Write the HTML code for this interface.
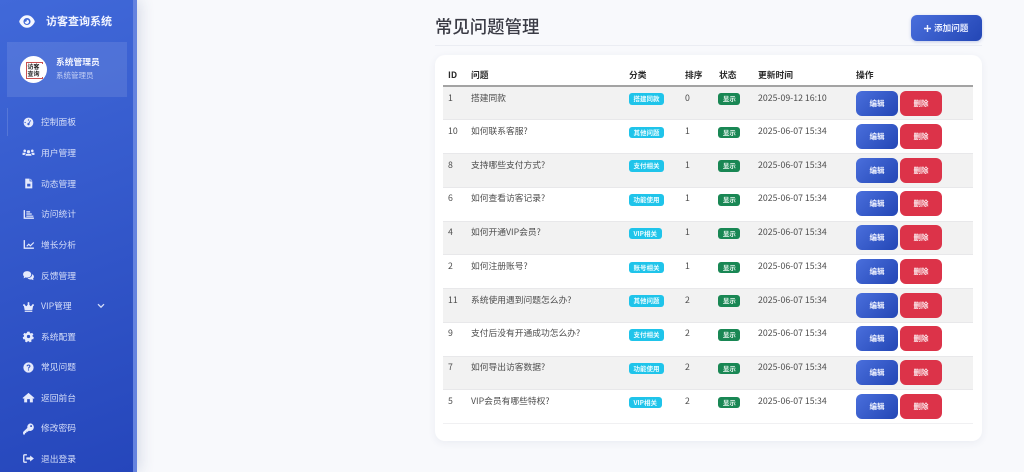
<!DOCTYPE html>
<html lang="zh"><head><meta charset="utf-8"><title>常见问题管理</title>
<style>
*{box-sizing:border-box;margin:0;padding:0}
html,body{width:1024px;height:472px;overflow:hidden;background:#f8f9fc;font-family:"Noto Sans CJK SC","Liberation Sans",sans-serif;color:#4a4a4a;font-size:8.75px}
.side{position:absolute;left:0;top:0;width:137px;height:472px;background:linear-gradient(160deg,#4169d9 0%,#2546bb 100%);border-right:4px solid #6583df;box-shadow:3px 0 14px rgba(40,60,120,.16)}
.logo{position:absolute;left:46px;top:13px;font-size:11px;font-weight:700;line-height:16px;color:#f1f4ff;white-space:nowrap}
.prof{position:absolute;left:7px;top:42px;width:120px;height:55px;background:rgba(255,255,255,.1)}
.av{position:absolute;left:13px;top:14px;width:27px;height:27px;border-radius:50%;background:#fff;color:#222;font-size:6px;font-weight:700;line-height:7px;text-align:center;padding-top:6.5px}
.av:before{content:"";position:absolute;left:6px;top:6px;width:15px;height:15px;border:1px solid #c8504f;clip-path:polygon(0 0,30% 0,30% 100%,0 100%,0 0,100% 0,100% 12%,0 12%,0 88%,100% 88%,100% 100%,0 100%)}
.n{position:absolute;left:49px;top:13px;font-size:8.75px;font-weight:700;color:#f3f5ff;line-height:13px;white-space:nowrap}
.s{position:absolute;left:49px;top:28px;font-size:7.5px;color:#c5d0f5;line-height:12px;white-space:nowrap}
.m{position:absolute;left:41px;font-size:8.75px;line-height:12px;color:#d6def9;white-space:nowrap}
.i{position:absolute;left:22px;width:13px;height:13px;margin-top:1px;fill:#e5eafc}
.act{position:absolute;left:7px;top:108px;width:1px;height:28px;background:rgba(255,255,255,.14)}
h1{position:absolute;left:435px;top:14px;font-size:17.4px;line-height:26px;font-weight:500;color:#3a3b45;white-space:nowrap}
.hr{position:absolute;left:435px;top:45px;width:547px;height:1px;background:#ebedf3}
.add{position:absolute;left:911px;top:15px;width:71px;height:26px;border-radius:6px;background:linear-gradient(135deg,#4a6fdc,#2346b5);color:#e8edff;font-size:8.6px;font-weight:700;line-height:26px;text-align:center;white-space:nowrap;box-shadow:0 1px 3px rgba(40,70,170,.25)}
.add svg{position:absolute;left:13px;top:9.5px;width:7px;height:7px;fill:#f0f3ff}
.add span{position:absolute;left:23px;top:0}
.card{position:absolute;left:435px;top:55px;width:547px;height:386px;background:#fff;border-radius:10px;box-shadow:0 2px 8px rgba(60,70,110,.07)}
table{position:absolute;left:8px;top:8px;width:530px;border-collapse:collapse;table-layout:fixed}
th{height:23px;text-align:left;font-size:8.75px;font-weight:700;color:#2b2b2b;padding:1px 0 0 5px;border-bottom:2px solid #a3a3a3;line-height:12px}
td{height:33.75px;vertical-align:top;padding:4.7px 0 0 5px;border-bottom:1px solid #e8e8ea;line-height:12px;white-space:nowrap;color:#4d4d4d}
tr.o td{background:#f2f2f2}
tr:last-child td{border-bottom:1px solid #f0f0f2}
.b{display:inline-block;height:11.5px;line-height:11.5px;border-radius:3px;padding:0 4.5px;font-size:6.5px;font-weight:700;color:#e8fbff;background:#1fc4ea;vertical-align:top;margin-top:1.8px;white-space:nowrap}
.g{background:#198754;color:#e6f5ee;padding:0 4.5px;margin-left:-.7px}
td.a{padding:3.5px 0 0 5px}
.e,.d{display:inline-block;width:42px;height:25px;border-radius:6px;font-size:7.5px;font-weight:700;line-height:25px;text-align:center;color:#f0f3ff;vertical-align:top}
.e{background:linear-gradient(135deg,#4a6fdc,#2346b5)}
.d{background:#dc3349;margin-left:2px;color:#fbe9ec}
</style></head><body>
<div class="side">
<svg viewBox="0 0 576 512" style="position:absolute;left:19px;top:13.5px;width:16px;height:15px;fill:#f4f6ff"><path d="M288 32C146 32 44 152 12 240c-4 10-4 22 0 32 32 88 134 208 276 208s244-120 276-208c4-10 4-22 0-32C532 152 430 32 288 32zm0 352a128 128 0 1 1 0-256 128 128 0 0 1 0 256zm0-192c-4 0-8 0-12 1 10 22 4 48-14 62-16 12-38 14-56 5-2 36 20 70 54 80 42 12 86-12 98-54 14-50-22-94-70-94z"/></svg>
<div class="logo">访客查询系统</div>
<div class="prof"><div class="av">访客<br>查询</div><div class="n">系统管理员</div><div class="s">系统管理员</div></div>
<div class="act"></div>

<svg class="i" style="top:114.5px" viewBox="0 0 24 24"><path d="M12 3a9 9 0 1 0 0 18 9 9 0 0 0 0-18zm0 3.2a1.2 1.2 0 1 1 0 2.4 1.2 1.2 0 0 1 0-2.4zM7 12a1.2 1.2 0 1 1 0-.1zm9.7-3.7-3 5.1a2.2 2.2 0 1 1-1.5-.8l3-5z"/></svg><div class="m" style="top:116px">控制面板</div>
<svg class="i" style="top:145px" viewBox="0 0 24 24"><path d="M12 7.5a3 3 0 1 1 0 6 3 3 0 0 1 0-6zM5 6.5a2.4 2.4 0 1 1 0 4.8 2.4 2.4 0 0 1 0-4.8zm14 0a2.4 2.4 0 1 1 0 4.8 2.4 2.4 0 0 1 0-4.8zM8.5 14.500h7a2 2 0 0 1 2 2V18h-11v-1.500a2 2 0 0 1 2-2zM1 12.500h5l1 1c-1 .6-2 1.500-2 3H1zm22 0h-5l-1 1c1 .6 2 1.500 2 3h4z"/></svg><div class="m" style="top:147px">用户管理</div>
<svg class="i" style="top:176px" viewBox="0 0 24 24"><path d="M6 3h8v5h5v13H6zm9.500 0 3.500 3.600h-3.500zM9.500 12.500h6v5h-6z" fill-rule="evenodd"/></svg><div class="m" style="top:177.500px">动态管理</div>
<svg class="i" style="top:206.500px" viewBox="0 0 24 24"><path d="M3 4h2.500v13.500H22V20H3zM8 6h7v2.200H8zm0 4h10v2.200H8zm0 4h13v2.200H8z"/></svg><div class="m" style="top:208px">访问统计</div>
<svg class="i" style="top:237px" viewBox="0 0 24 24"><path d="M3 4h2.500v13.500H22V20H3zm5 10.500 4.500-4.500 3 3L21 7.500l1.500 1.500-7 7-3-3-3 3z"/></svg><div class="m" style="top:239px">增长分析</div>
<svg class="i" style="top:267.500px" viewBox="0 0 24 24"><path d="M9.500 4c4.200 0 7.500 2.600 7.500 6s-3.300 6-7.500 6c-1 0-2-.1-2.900-.5C5.500 16.300 4 17 2.500 17c.8-.8 1.300-1.900 1.400-3C2.700 12.900 2 11.500 2 10c0-3.400 3.300-6 7.500-6zm9 5.500c2 .9 3.500 2.700 3.500 4.700 0 1.400-.6 2.600-1.700 3.600.1 1 .6 2 1.300 2.700-1.400 0-2.700-.6-3.800-1.300-3 .7-6-.3-7.500-2.300 4.600 0 9-3 8.200-7.400z"/></svg><div class="m" style="top:269.500px">反馈管理</div>
<svg class="i" style="top:298.500px" viewBox="0 0 24 24"><path d="M12 4a1.800 1.800 0 0 1 1 3.300l2.500 4.200 3-1.800a1.800 1.800 0 1 1 2 1.600L19 19H5L3.500 11.300a1.800 1.800 0 1 1 2-1.600l3 1.800L11 7.300A1.800 1.800 0 0 1 12 4zM5 20h14v2H5z"/></svg><div class="m" style="top:300px">VIP管理</div>
<svg style="position:absolute;left:96.500px;top:302.500px;width:8px;height:6px;fill:none;stroke:#d6def9;stroke-width:1.300" viewBox="0 0 8 6"><path d="M1 1.200 4 4.200 7 1.200"/></svg>
<svg class="i" style="top:329px" viewBox="0 0 24 24"><path d="M10 3h4l.6 2.600 1.700.8 2.400-1.200 2.400 3-1.800 2 .2 1.800 2.300 1.300-.9 3.700-2.600.1-1.200 1.500.6 2.600-3.500 1.600-1.600-2.100h-2l-1.600 2.100-3.500-1.600.6-2.600-1.200-1.500-2.600-.1-.9-3.700 2.300-1.300.2-1.800-1.800-2 2.400-3 2.400 1.200 1.700-.8zM12 9a3 3 0 1 0 0 6 3 3 0 0 0 0-6z" fill-rule="evenodd"/></svg><div class="m" style="top:330.500px">系统配置</div>
<svg class="i" style="top:359.500px" viewBox="0 0 24 24"><path fill-rule="evenodd" d="M12 2.500a9.500 9.500 0 1 1 0 19 9.500 9.500 0 0 1 0-19zM12 6.500c-2 0-3.500 1.200-3.700 3l2 .4c.2-.9.800-1.400 1.700-1.400s1.500.5 1.500 1.200c0 1.400-2.500 1.600-2.500 4.300h2c0-1.800 2.600-2.100 2.600-4.500 0-1.900-1.600-3-3.600-3zm-1 9v2h2v-2z"/></svg><div class="m" style="top:361px">常见问题</div>
<svg class="i" style="top:390px" viewBox="0 0 24 24"><path d="M12 3.500 23 13l-1.300 1.500L20 13v8h-5.500v-6h-5v6H4v-8l-1.700 1.500L1 13z"/></svg><div class="m" style="top:392px">返回前台</div>
<svg class="i" style="top:420.500px" viewBox="0 0 24 24"><path fill-rule="evenodd" d="M15 2.500a7 7 0 1 1-2.400 13.600L10.500 18H8v2.500H5.500V23H2v-4.500l7.900-7.700A7 7 0 0 1 15 2.500zm1.800 3.200a1.800 1.800 0 1 0 0 3.600 1.800 1.800 0 0 0 0-3.600z"/></svg><div class="m" style="top:422px">修改密码</div>
<svg class="i" style="top:451px" viewBox="0 0 24 24"><path d="M9 4H5a3 3 0 0 0-3 3v10a3 3 0 0 0 3 3h4v-2.500H5a.5.500 0 0 1-.5-.5V7a.5.500 0 0 1 .5-.5h4zm6 2.500 7 5.500-7 5.500V14H8v-4h7z"/></svg><div class="m" style="top:453px">退出登录</div>
</div>

<h1>常见问题管理</h1>
<div class="hr"></div>
<div class="add"><svg viewBox="0 0 8 8"><path d="M3.200 0h1.600v3.200H8v1.600H4.800V8H3.200V4.800H0V3.200h3.200z"/></svg><span>添加问题</span></div>

<div class="card">
<table>
<colgroup><col style="width:23px"><col style="width:158px"><col style="width:56px"><col style="width:34px"><col style="width:39px"><col style="width:98px"><col></colgroup>
<thead><tr><th>ID</th><th>问题</th><th>分类</th><th>排序</th><th>状态</th><th>更新时间</th><th>操作</th></tr></thead>
<tbody>
<tr class="o"><td>1</td><td>搭建同款</td><td><span class="b">搭建同款</span></td><td>0</td><td><span class="b g">显示</span></td><td>2025-09-12 16:10</td><td class="a"><span class="e">编辑</span><span class="d">删除</span></td></tr>
<tr><td>10</td><td>如何联系客服?</td><td><span class="b">其他问题</span></td><td>1</td><td><span class="b g">显示</span></td><td>2025-06-07 15:34</td><td class="a"><span class="e">编辑</span><span class="d">删除</span></td></tr>
<tr class="o"><td>8</td><td>支持哪些支付方式?</td><td><span class="b">支付相关</span></td><td>1</td><td><span class="b g">显示</span></td><td>2025-06-07 15:34</td><td class="a"><span class="e">编辑</span><span class="d">删除</span></td></tr>
<tr><td>6</td><td>如何查看访客记录?</td><td><span class="b">功能使用</span></td><td>1</td><td><span class="b g">显示</span></td><td>2025-06-07 15:34</td><td class="a"><span class="e">编辑</span><span class="d">删除</span></td></tr>
<tr class="o"><td>4</td><td>如何开通VIP会员?</td><td><span class="b">VIP相关</span></td><td>1</td><td><span class="b g">显示</span></td><td>2025-06-07 15:34</td><td class="a"><span class="e">编辑</span><span class="d">删除</span></td></tr>
<tr><td>2</td><td>如何注册账号?</td><td><span class="b">账号相关</span></td><td>1</td><td><span class="b g">显示</span></td><td>2025-06-07 15:34</td><td class="a"><span class="e">编辑</span><span class="d">删除</span></td></tr>
<tr class="o"><td>11</td><td>系统使用遇到问题怎么办?</td><td><span class="b">其他问题</span></td><td>2</td><td><span class="b g">显示</span></td><td>2025-06-07 15:34</td><td class="a"><span class="e">编辑</span><span class="d">删除</span></td></tr>
<tr><td>9</td><td>支付后没有开通成功怎么办?</td><td><span class="b">支付相关</span></td><td>2</td><td><span class="b g">显示</span></td><td>2025-06-07 15:34</td><td class="a"><span class="e">编辑</span><span class="d">删除</span></td></tr>
<tr class="o"><td>7</td><td>如何导出访客数据?</td><td><span class="b">功能使用</span></td><td>2</td><td><span class="b g">显示</span></td><td>2025-06-07 15:34</td><td class="a"><span class="e">编辑</span><span class="d">删除</span></td></tr>
<tr><td>5</td><td>VIP会员有哪些特权?</td><td><span class="b">VIP相关</span></td><td>2</td><td><span class="b g">显示</span></td><td>2025-06-07 15:34</td><td class="a"><span class="e">编辑</span><span class="d">删除</span></td></tr>
</tbody></table>
</div>
</body></html>
